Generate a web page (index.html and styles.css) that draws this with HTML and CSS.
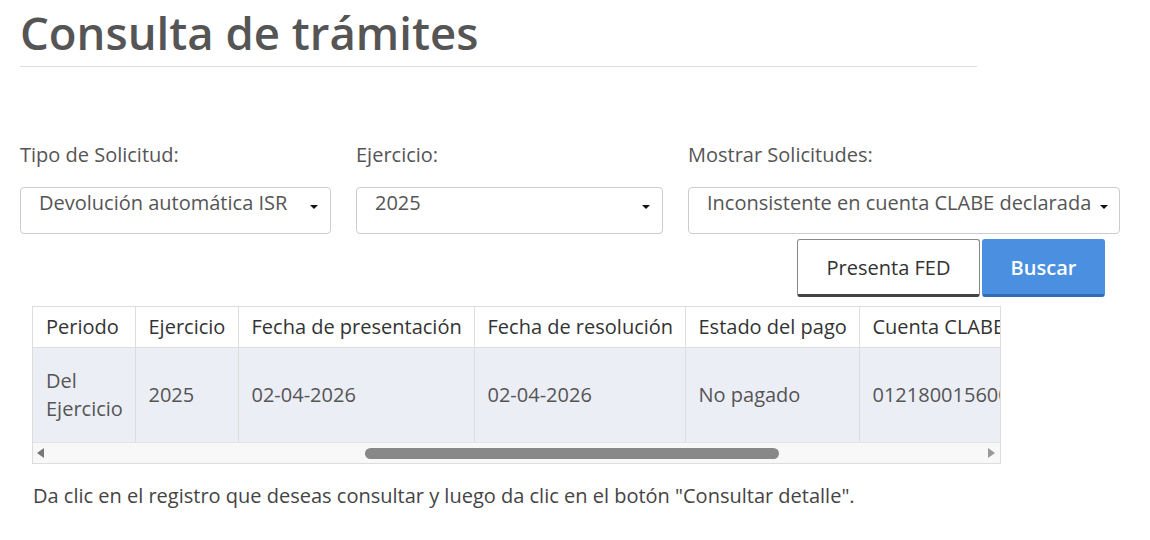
FILE: index.html
```html
<!DOCTYPE html>
<html lang="es">
<head>
    <meta charset="UTF-8">
    <meta name="viewport" content="width=device-width, initial-scale=1.0">
    <title>Consulta de trámites</title>
    <link rel="stylesheet" href="styles.css">
</head>
<body>
    <div class="page">
        <h1 class="title">Consulta de trámites</h1>

        <form class="filters">
            <div class="field field-tipo">
                <label for="tipo">Tipo de Solicitud:</label>
                <div class="select-wrap">
                    <select id="tipo">
                        <option>Devolución automática ISR</option>
                    </select>
                    <span class="caret"></span>
                </div>
            </div>
            <div class="field field-ejercicio">
                <label for="ejercicio">Ejercicio:</label>
                <div class="select-wrap">
                    <select id="ejercicio">
                        <option>2025</option>
                    </select>
                    <span class="caret"></span>
                </div>
            </div>
            <div class="field field-mostrar">
                <label for="mostrar">Mostrar Solicitudes:</label>
                <div class="select-wrap">
                    <select id="mostrar">
                        <option>Inconsistente en cuenta CLABE declarada</option>
                    </select>
                    <span class="caret"></span>
                </div>
            </div>
        </form>

        <div class="actions">
            <button type="button" class="btn btn-default">Presenta FED</button>
            <button type="button" class="btn btn-primary">Buscar</button>
        </div>

        <div class="grid">
            <div class="grid-body">
                <table>
                    <thead>
                        <tr>
                            <th class="c-periodo">Periodo</th>
                            <th class="c-ejercicio">Ejercicio</th>
                            <th class="c-presentacion">Fecha de presentación</th>
                            <th class="c-resolucion">Fecha de resolución</th>
                            <th class="c-estado">Estado del pago</th>
                            <th class="c-cuenta">Cuenta CLABE</th>
                        </tr>
                    </thead>
                    <tbody>
                        <tr>
                            <td>Del Ejercicio</td>
                            <td>2025</td>
                            <td>02-04-2026</td>
                            <td>02-04-2026</td>
                            <td>No pagado</td>
                            <td>012180015600123456</td>
                        </tr>
                    </tbody>
                </table>
            </div>
            <div class="scrollbar">
                <span class="arrow arrow-left"></span>
                <div class="track">
                    <div class="thumb"></div>
                </div>
                <span class="arrow arrow-right"></span>
            </div>
        </div>

        <p class="hint">Da clic en el registro que deseas consultar y luego da clic en el botón "Consultar detalle".</p>
    </div>
</body>
</html>
```

FILE: styles.css
```css
body {
    margin: 0;
    font-family: "Open Sans", "Noto Sans", sans-serif;
    color: #555;
    background: #fff;
}
.page {
    padding: 0 20px;
}
.title {
    width: 957px;
    margin: 0;
    padding: 4px 0 5px;
    font-size: 45.5px;
    font-weight: 600;
    line-height: 57px;
    color: #555;
    border-bottom: 1px solid #ddd;
}
.filters {
    display: flex;
    gap: 25px;
    margin-top: 74px;
}
.field {
    display: flex;
    flex-direction: column;
    gap: 18px;
}
.field-tipo { width: 311px; }
.field-ejercicio { width: 307px; }
.field-mostrar { width: 432px; }
label {
    font-size: 20px;
    line-height: 28px;
    color: #555;
}
.select-wrap {
    position: relative;
}
select {
    appearance: none;
    -webkit-appearance: none;
    width: 100%;
    height: 47px;
    padding: 0 24px 17px 18px;
    font-family: inherit;
    font-size: 20px;
    color: #555;
    background: #fff;
    border: 1px solid #ccc;
    border-radius: 4px;
}
.caret {
    position: absolute;
    right: 13px;
    top: 18px;
    width: 0;
    height: 0;
    border-left: 4px solid transparent;
    border-right: 4px solid transparent;
    border-top: 4px solid #111;
}
.field-mostrar .caret {
    right: 12px;
}
.actions {
    display: flex;
    justify-content: flex-end;
    gap: 2px;
    width: 1085px;
    margin-top: 5px;
}
.btn {
    height: 58px;
    font-family: inherit;
    font-size: 20px;
    border-radius: 3px;
    cursor: pointer;
}
.btn-default {
    width: 183px;
    color: #333;
    background: #fff;
    border: 1px solid #888;
    border-bottom: 3px solid #444;
}
.btn-primary {
    width: 123px;
    color: #fff;
    font-weight: 600;
    background: #4a8fe0;
    border: 1px solid #4a8fe0;
    border-bottom: 3px solid #2f6db5;
}
.grid {
    width: 967px;
    margin: 9px 0 0 12px;
    border: 1px solid #ddd;
}
.grid-body {
    overflow: hidden;
}
table {
    border-collapse: collapse;
    table-layout: fixed;
    width: 1100px;
}
th, td {
    box-sizing: border-box;
    padding: 0 13px;
    text-align: left;
    vertical-align: middle;
    border-right: 1px solid #ddd;
    font-size: 20px;
    white-space: nowrap;
    overflow: hidden;
}
th {
    height: 40px;
    font-weight: 400;
    color: #333;
    background: #fff;
    border-bottom: 1px solid #ddd;
}
td {
    height: 95px;
    color: #555;
    line-height: 28px;
    background: #eceef6;
}
td:first-child {
    white-space: normal;
}
.c-periodo { width: 102px; }
.c-ejercicio { width: 103px; }
.c-presentacion { width: 236px; }
.c-resolucion { width: 211px; }
.c-estado { width: 174px; }
.c-cuenta { width: 274px; }
.scrollbar {
    display: flex;
    align-items: center;
    height: 20px;
    background: #f8f8f8;
    border-top: 1px solid #e4e4e4;
}
.arrow {
    width: 0;
    height: 0;
    border-top: 5px solid transparent;
    border-bottom: 5px solid transparent;
}
.arrow-left {
    margin: 0 8px 0 4px;
    border-right: 7px solid #777;
}
.arrow-right {
    margin: 0 5px 0 8px;
    border-left: 7px solid #999;
}
.track {
    flex: 1;
}
.thumb {
    width: 414px;
    height: 11px;
    margin-left: 313px;
    border-radius: 6px;
    background: #888;
}
.hint {
    margin: 18px 0 0 13px;
    font-size: 20px;
    line-height: 28px;
    color: #444;
}
```
